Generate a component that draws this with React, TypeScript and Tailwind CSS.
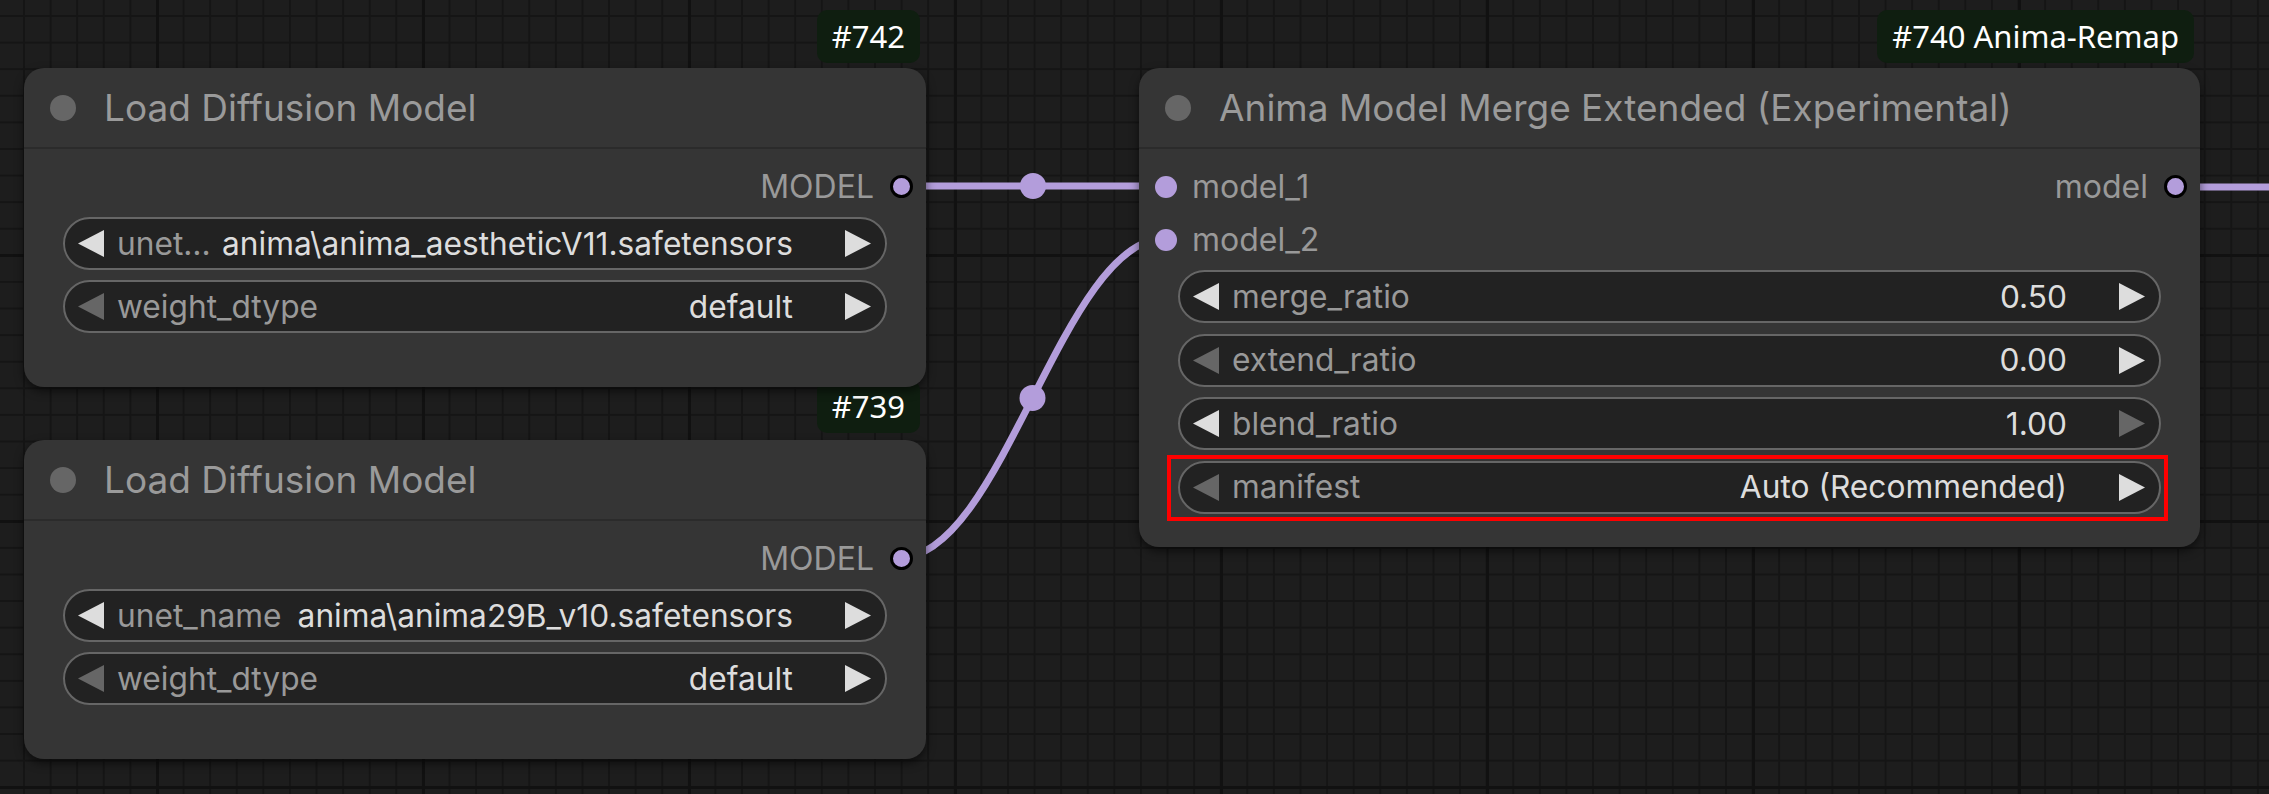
import React from "react";

const LINK = "#b39ddb";

type ArrowProps = { dir: "l" | "r"; on: boolean };

function Arrow({ dir, on }: ArrowProps) {
  return (
    <svg width="26" height="27" viewBox="0 0 26 27" className="shrink-0">
      <polygon
        points={dir === "l" ? "26,0 0,13.5 26,27" : "0,0 26,13.5 0,27"}
        fill={on ? "#dddddd" : "#666666"}
      />
    </svg>
  );
}

type WidgetProps = {
  label: string;
  value: string;
  left: boolean;
  right: boolean;
};

function Widget({ label, value, left, right }: WidgetProps) {
  return (
    <div className="flex h-[53px] items-center rounded-full border-2 border-[#666666] bg-[#222222] pl-[13px] pr-[14px] text-[31.7px] leading-none">
      <Arrow dir="l" on={left} />
      <span className="ml-[13px] shrink-0 whitespace-nowrap text-[#999999]">{label}</span>
      <span className="ml-auto shrink-0 whitespace-nowrap pl-[8px] text-[#dddddd]">{value}</span>
      <span className="ml-[52px] flex shrink-0">
        <Arrow dir="r" on={right} />
      </span>
    </div>
  );
}

function InSlot({ label }: { label: string }) {
  return (
    <div className="flex h-[53px] items-center gap-[15px] pl-[16px]">
      <span className="h-[22px] w-[22px] rounded-full bg-[#b39ddb]" />
      <span className="text-[32px] leading-none text-[#999999]">{label}</span>
    </div>
  );
}

function OutSlot({ label }: { label: string }) {
  return (
    <div className="flex h-[53px] items-center gap-[16px] pr-[13px]">
      <span className="text-[32px] leading-none text-[#999999]">{label}</span>
      <span className="h-[23px] w-[23px] rounded-full border-[3px] border-black bg-[#b39ddb]" />
    </div>
  );
}

function Header({ title }: { title: string }) {
  return (
    <div className="flex h-[81px] shrink-0 items-center gap-[28px] border-b-2 border-[#2b2b2b] pl-[26px]">
      <span className="h-[26px] w-[26px] rounded-full bg-[#666666]" />
      <span className="whitespace-nowrap text-[37px] leading-none text-[#9a9a9a]">{title}</span>
    </div>
  );
}

function LoadModelNode({ pos, file, label }: { pos: string; file: string; label: string }) {
  return (
    <div
      className={`absolute flex h-[319px] w-[902px] flex-col rounded-[20px] bg-[#353535] shadow-[0_4px_10px_rgba(0,0,0,0.55)] ${pos}`}
    >
      <Header title="Load Diffusion Model" />
      <div className="flex flex-col pt-[11px]">
        <div className="flex justify-end">
          <OutSlot label="MODEL" />
        </div>
        <div className="mx-[39px] mt-[4px] flex flex-col gap-[10px]">
          <Widget label={label} value={file} left={true} right={true} />
          <Widget label="weight_dtype" value="default" left={false} right={true} />
        </div>
      </div>
    </div>
  );
}

function Badge({ text, pos }: { text: string; pos: string }) {
  return (
    <div
      className={`absolute flex h-[53px] items-center rounded-[10px] bg-[#0f1e10] px-[15px] font-['Noto_Sans',sans-serif] text-[31px] leading-none text-white ${pos}`}
    >
      {text}
    </div>
  );
}

export default function App() {
  return (
    <div className="relative h-[794px] w-[2269px] overflow-hidden bg-[#1d1d1d] bg-[linear-gradient(to_right,#111111_3px,transparent_3px),linear-gradient(to_bottom,#111111_3px,transparent_3px),linear-gradient(to_right,#151515_2px,transparent_2px),linear-gradient(to_bottom,#151515_2px,transparent_2px)] bg-[size:266px_266px,266px_266px,26.6px_26.6px,26.6px_26.6px] bg-[position:156px_254px,156px_254px,23px_15px,23px_15px] font-[Inter,sans-serif]">
      {/* links between slots */}
      <svg className="absolute inset-0" width="2269" height="794" viewBox="0 0 2269 794">
        <g fill="none" stroke={LINK} strokeWidth="7">
          <path d="M 899 186 L 1166 186" />
          <path d="M 899 558 C 1003 558, 1062 238, 1166 238" />
          <path d="M 2176 187 L 2269 187" />
        </g>
        <circle cx="1033" cy="186" r="13" fill={LINK} />
        <circle cx="1032.5" cy="398" r="13" fill={LINK} />
      </svg>

      <Badge text="#742" pos="right-[1349px] top-[10px]" />
      <Badge text="#739" pos="right-[1349px] top-[380px]" />
      <Badge text="#740 Anima-Remap" pos="right-[75px] top-[10px]" />

      <LoadModelNode
        pos="left-[24px] top-[68px]"
        label="unet…"
        file="anima\anima_aestheticV11.safetensors"
      />
      <LoadModelNode
        pos="left-[24px] top-[440px]"
        label="unet_name"
        file="anima\anima29B_v10.safetensors"
      />

      <div className="absolute left-[1139px] top-[68px] flex h-[479px] w-[1061px] flex-col rounded-[20px] bg-[#353535] shadow-[0_4px_10px_rgba(0,0,0,0.55)]">
        <Header title="Anima Model Merge Extended (Experimental)" />
        <div className="flex flex-col pt-[11px]">
          <div className="flex items-center justify-between">
            <InSlot label="model_1" />
            <OutSlot label="model" />
          </div>
          <InSlot label="model_2" />
          <div className="mx-[39px] mt-[4px] flex flex-col gap-[10.5px]">
            <Widget label="merge_ratio" value="0.50" left={true} right={true} />
            <Widget label="extend_ratio" value="0.00" left={false} right={true} />
            <Widget label="blend_ratio" value="1.00" left={true} right={false} />
            <div className="relative">
              <Widget label="manifest" value="Auto (Recommended)" left={false} right={true} />
              <span className="pointer-events-none absolute -bottom-[7px] -left-[11px] -right-[7px] -top-[6px] border-4 border-[#ff0000]" />
            </div>
          </div>
        </div>
      </div>
    </div>
  );
}
